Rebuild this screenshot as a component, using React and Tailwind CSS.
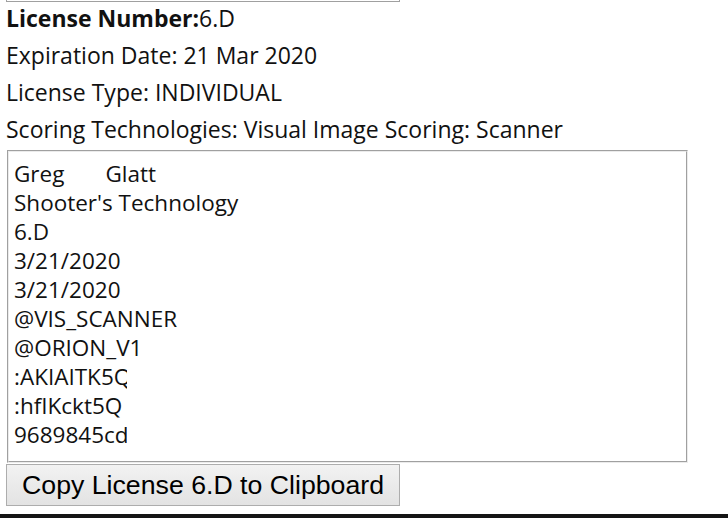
export default function App() {
  const keys = [":AKIAITK5Q", ":hfIKckt5Q", "9689845cd"];

  return (
    <div className="w-[728px] h-[518px] bg-white relative overflow-hidden text-[#111] font-['Open_Sans',sans-serif]">
      <div className="ml-[6px] w-[394px] h-[2px] border-x border-b border-[#a0a0a0]"></div>
      <div className="pl-[6px] text-[23px]">
        <div className="h-[35px] leading-[33px]">
          <span className="font-bold">License Number:</span>6.D
        </div>
        <div className="h-[37px] leading-[37px]">Expiration Date: 21 Mar 2020</div>
        <div className="h-[37px] leading-[37px]">License Type: INDIVIDUAL</div>
        <div className="h-[37px] leading-[37px]">Scoring Technologies: Visual Image Scoring: Scanner</div>
      </div>
      <div className="ml-[7px] mt-[2px] w-[681px] h-[313px] border-t border-l border-[#a0a0a0] border-r-[#ebebeb] border-b-[#ebebeb] border-r border-b">
        <div className="h-full border-t border-l border-[#ebebeb] border-r border-b border-r-[#a0a0a0] border-b-[#a0a0a0] px-[5px] pt-[7px] text-[22.5px] leading-[29px]">
          <div>
            <span>Greg</span>
            <span className="ml-[41px]">Glatt</span>
          </div>
          <div>Shooter's Technology</div>
          <div>6.D</div>
          <div>3/21/2020</div>
          <div>3/21/2020</div>
          <div>@VIS_SCANNER</div>
          <div>@ORION_V1</div>
          {keys.map((k) => (
            <div key={k} className="w-[113px] overflow-hidden whitespace-nowrap">
              {k}
            </div>
          ))}
        </div>
      </div>
      <button className="ml-[6px] mt-px w-[394px] h-[42px] border border-[#adadad] bg-gradient-to-b from-[#f2f2f2] to-[#e3e3e3] text-[26.7px] font-['Liberation_Sans',Arial,sans-serif] text-black">
        Copy License 6.D to Clipboard
      </button>
      <div className="absolute left-0 bottom-0 w-full h-[4px] bg-[#151515]"></div>
    </div>
  );
}
